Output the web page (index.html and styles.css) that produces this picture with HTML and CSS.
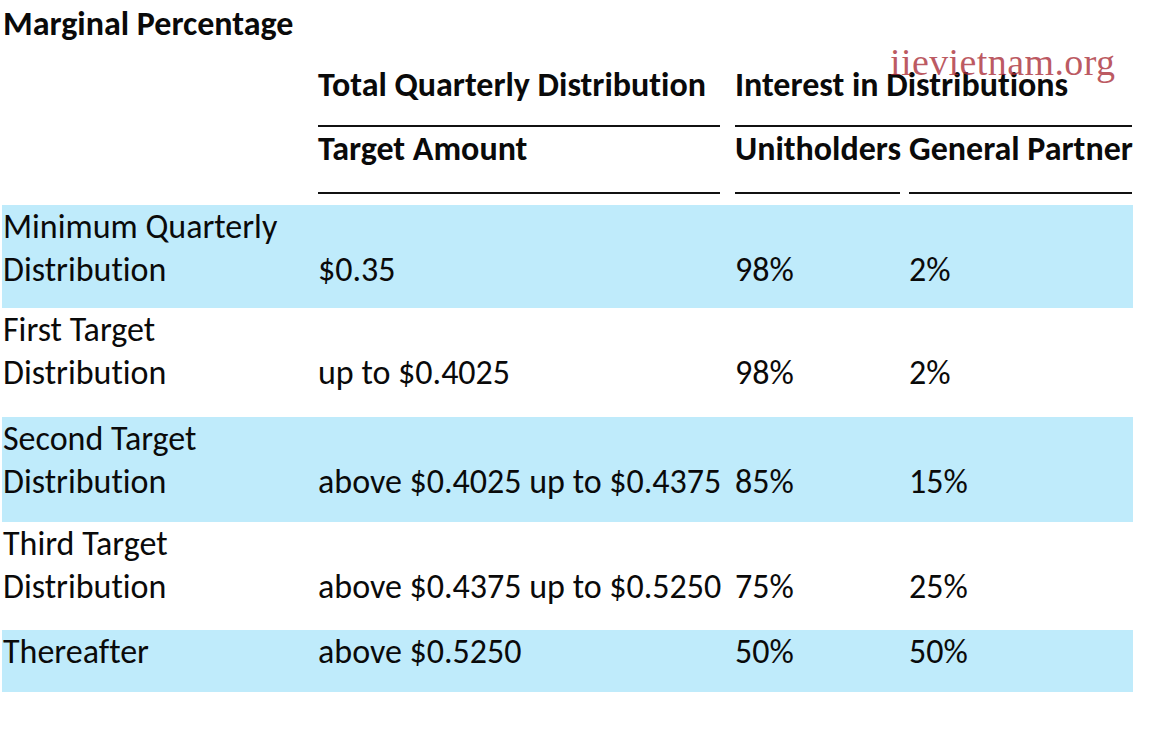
FILE: index.html
```html
<!DOCTYPE html>
<html lang="en">
<head>
<meta charset="utf-8">
<title>Marginal Percentage</title>
<link rel="stylesheet" href="styles.css">
</head>
<body>
<div class="page">
  <div class="title">Marginal Percentage</div>
  <div class="watermark">iievietnam.org</div>

  <div class="table">
    <div class="hrow hrow1">
      <div class="cell"></div>
      <div class="cell"><span class="hd hd-c2">Total Quarterly Distribution</span></div>
      <div class="cell span2"><span class="hd hd-c34">Interest in Distributions</span></div>
    </div>
    <div class="hrow hrow2">
      <div class="cell"></div>
      <div class="cell"><span class="hd hd-c2">Target Amount</span></div>
      <div class="cell"><span class="hd hd-c3">Unitholders</span></div>
      <div class="cell"><span class="hd hd-c4">General Partner</span></div>
    </div>

    <div class="row row1 blue">
      <div class="cell label">Minimum Quarterly<br>Distribution</div>
      <div class="cell">$0.35</div>
      <div class="cell">98%</div>
      <div class="cell">2%</div>
    </div>
    <div class="row row2">
      <div class="cell label">First Target<br>Distribution</div>
      <div class="cell">up to $0.4025</div>
      <div class="cell">98%</div>
      <div class="cell">2%</div>
    </div>
    <div class="row row3 blue">
      <div class="cell label">Second Target<br>Distribution</div>
      <div class="cell">above $0.4025 up to $0.4375</div>
      <div class="cell">85%</div>
      <div class="cell">15%</div>
    </div>
    <div class="row row4">
      <div class="cell label">Third Target<br>Distribution</div>
      <div class="cell">above $0.4375 up to $0.5250</div>
      <div class="cell">75%</div>
      <div class="cell">25%</div>
    </div>
    <div class="row row5 blue">
      <div class="cell label">Thereafter</div>
      <div class="cell">above $0.5250</div>
      <div class="cell">50%</div>
      <div class="cell">50%</div>
    </div>
  </div>
</div>
</body>
</html>
```

FILE: styles.css
```css
html, body {
  margin: 0;
  padding: 0;
  background: #ffffff;
}

body {
  font-family: Carlito, Lato, "Open Sans", sans-serif;
  font-size: 34px;
  line-height: 43px;
  color: #0a0a0a;
  font-variant-ligatures: none;
  font-feature-settings: "liga" 0, "clig" 0;
}

.page {
  position: relative;
  width: 1152px;
  height: 747px;
  overflow: hidden;
}

.title {
  font-weight: bold;
  height: 45px;
  line-height: 47px;
  padding-left: 3px;
  white-space: nowrap;
}

.watermark {
  position: absolute;
  left: 890px;
  top: 37px;
  font-family: "Liberation Serif", "Times New Roman", serif;
  font-size: 38px;
  line-height: 50px;
  letter-spacing: 0.4px;
  color: rgba(170, 45, 55, 0.78);
  white-space: nowrap;
  z-index: 2;
}

.table {
  margin-left: 2px;
  width: 1131px;
}

.hrow,
.row {
  display: grid;
  grid-template-columns: 316px 417px 174px 224px;
  align-items: end;
  white-space: nowrap;
}

.hrow {
  font-weight: bold;
}

.hrow1 {
  height: 82px;
}

.hrow1 .hd {
  padding-bottom: 19px;
}

.hrow2 {
  height: 63px;
  margin-bottom: 15px;
}

.span2 {
  grid-column: span 2;
}

.hd {
  display: block;
  padding-bottom: 22px;
  border-bottom: 2px solid #111;
}

.hd-c2 {
  margin-right: 15px;
}

.hd-c34 {
  margin-right: 1px;
}

.hd-c3 {
  margin-right: 9px;
}

.hd-c4 {
  margin-right: 1px;
}

.label {
  padding-left: 1px;
}

.blue {
  background: #bfebfb;
}

.row1 { height: 103px; padding-bottom: 20px; box-sizing: border-box; }
.row2 { height: 109px; padding-bottom: 24px; box-sizing: border-box; }
.row3 { height: 105px; padding-bottom: 20px; box-sizing: border-box; }
.row4 { height: 108px; padding-bottom: 25px; box-sizing: border-box; }
.row5 { height: 62px; padding-bottom: 20px; box-sizing: border-box; }
```
